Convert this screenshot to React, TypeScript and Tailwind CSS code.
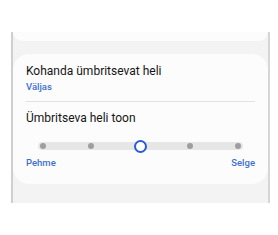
export default function App() {
  const stops = [0, 1, 2, 3, 4];
  const active = 2;
  return (
    <div className="h-[235px] w-[278px] overflow-hidden bg-white pt-[32px] pl-[11px] pr-[8px]" style={{ fontFamily: 'Roboto, "Noto Sans", sans-serif' }}>
      <div className="flex h-[171px] flex-col border-x-2 border-l-[#cfcfcf] border-r-[#d6d6d6] bg-[#f3f3f3]">
        <div className="h-[9px] rounded-b-[14px] bg-[#fcfcfc]" />
        <div className="mt-[13px] rounded-[16px] bg-[#fcfcfc] px-[13px] pb-[15px] pt-[8px]">
          <div className="text-[12px] leading-[18px] text-[#151515]">Kohanda ümbritsevat heli</div>
          <div className="text-[9.5px] leading-[13px] font-medium text-[#3f6fcf]">Väljas</div>
          <div className="mt-[8px] h-px bg-[#e2e2e2]" />
          <div className="mt-[7px] text-[12px] leading-[18px] text-[#151515]">Ümbritseva heli toon</div>
          <div className="relative mx-[12px] mt-[15px] flex h-[8px] items-center justify-between rounded-full bg-[#e6e6e6]">
            {stops.map((s) =>
              s === active ? (
                <div key={s} className="h-[13px] w-[13px] rounded-full border-2 border-[#2a5bd7] bg-white" />
              ) : (
                <div key={s} className="mx-[2px] h-[6px] w-[6px] rounded-full bg-[#9e9e9e]" />
              )
            )}
          </div>
          <div className="mt-[6px] flex justify-between text-[9.5px] leading-[13px] font-medium text-[#3f6fcf]">
            <span>Pehme</span>
            <span>Selge</span>
          </div>
        </div>
      </div>
    </div>
  );
}
